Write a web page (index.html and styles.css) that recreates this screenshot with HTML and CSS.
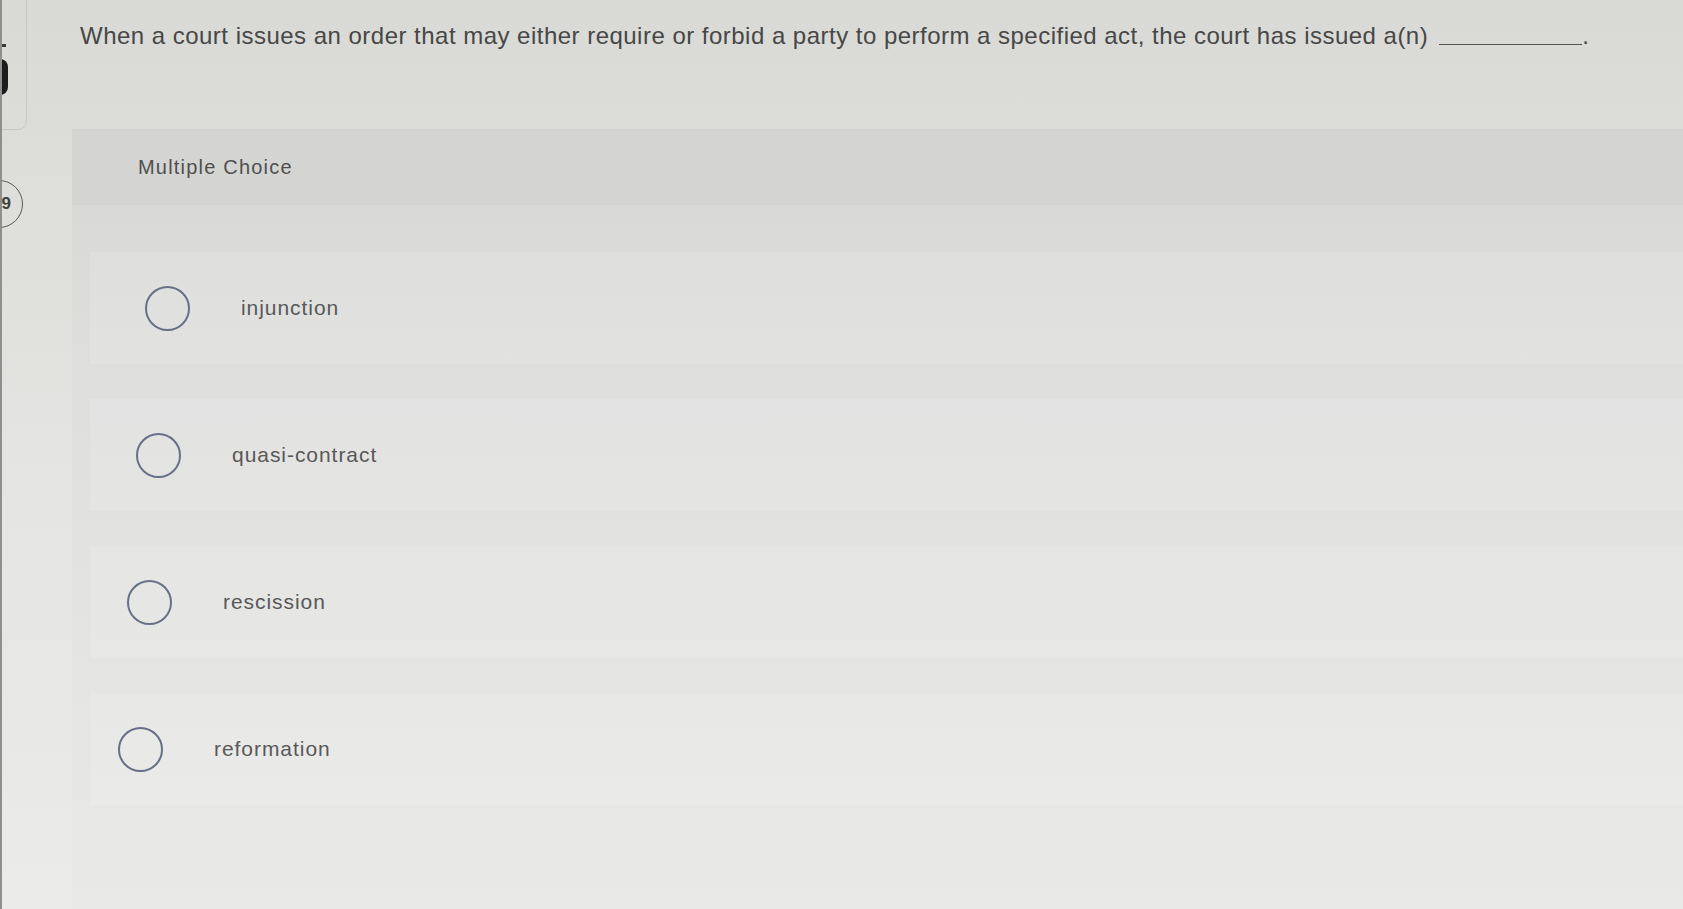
FILE: index.html
```html
<!DOCTYPE html>
<html lang="en">
  <head>
    <meta charset="UTF-8" />
    <title>Multiple Choice</title>
    <link rel="stylesheet" href="styles.css">
  </head>
  <body>
    <div class="rail">
      <div class="rail-top"></div>
      <div class="rail-dot"></div>
      <div class="rail-dash"></div>
      <div class="badge">9</div>
    </div>

    <div class="main">
      <p class="question">
        When a court issues an order that may either require or forbid a party to perform a specified act, the court has issued a(n)
        <span class="blank"></span>.
      </p>

      <div class="card">
        <div class="card-header">Multiple Choice</div>

        <ul class="options">
          <li class="option">
            <span class="radio"></span>
            <span class="option-text">injunction</span>
          </li>
          <li class="option">
            <span class="radio"></span>
            <span class="option-text">quasi-contract</span>
          </li>
          <li class="option">
            <span class="radio"></span>
            <span class="option-text">rescission</span>
          </li>
          <li class="option">
            <span class="radio"></span>
            <span class="option-text">reformation</span>
          </li>
        </ul>
      </div>
    </div>
  </body>
</html>
```

FILE: styles.css
```css
html,
body {
  height: 100%;
}
body {
  display: flex;
  margin: 0;
  padding: 0;
  overflow: hidden;
  font-family: "Liberation Sans", Arial, sans-serif;
  color: #4b4b4b;
  background: linear-gradient(#d9dad5, #e4e5e2 50%, #ebebea);
  border-left: 2px solid #8f8f8d;
}

/* left rail (partly cut off) */
.rail {
  position: relative;
  flex: none;
  width: 25px;
}
.rail-top {
  height: 130px;
  border-right: 1px solid #c6c7c2;
  border-bottom: 1px solid #c6c7c2;
  border-bottom-right-radius: 9px;
  box-sizing: border-box;
}
.rail-dot {
  position: absolute;
  left: -2px;
  top: 59px;
  width: 8px;
  height: 36px;
  background: #1c1c1c;
  border-radius: 0 18px 18px 0;
}
.rail-dash {
  position: absolute;
  left: -2px;
  top: 44px;
  width: 6px;
  height: 3px;
  background: #3a3a3a;
}
.badge {
  position: absolute;
  left: -27px;
  top: 180px;
  width: 48px;
  height: 48px;
  border: 1.5px solid #5b5b5b;
  border-radius: 50%;
  box-sizing: border-box;
  display: flex;
  align-items: center;
  justify-content: flex-end;
  padding-right: 11px;
  font-size: 17px;
  font-weight: bold;
  color: #3e3e3e;
}

.main {
  flex: 1;
  padding-left: 53px;
  display: flex;
  flex-direction: column;
}

.question {
  margin: 21px 0 0 0;
  font-size: 24px;
  line-height: 30px;
  letter-spacing: 0.48px;
  white-space: nowrap;
  color: #474747;
}
.blank {
  display: inline-block;
  width: 143px;
  margin-left: 4px;
  border-bottom: 1.5px solid #555;
  vertical-align: -1px;
}

.card {
  flex: 1;
  margin: 78px 0 0 -8px;
  background: linear-gradient(#d7d8d5, #e0e1df 40%, #e9e9e8);
}
.card-header {
  height: 76px;
  display: flex;
  align-items: center;
  padding-left: 66px;
  font-size: 20px;
  letter-spacing: 1.2px;
  color: #4f4f4f;
  background: #d4d5d2;
}

.options {
  list-style: none;
  margin: 0;
  padding: 47px 0 0 18px;
  display: flex;
  flex-direction: column;
  gap: 35px;
}
.option {
  height: 112px;
  display: flex;
  align-items: center;
  gap: 51px;
  padding-left: 55px;
  background: rgba(255, 255, 255, 0.12);
}
.option:nth-child(2) {
  padding-left: 46px;
}
.option:nth-child(3) {
  padding-left: 37px;
}
.option:nth-child(4) {
  padding-left: 28px;
}
.radio {
  width: 45px;
  height: 45px;
  border: 2px solid #687089;
  border-radius: 50%;
  box-sizing: border-box;
  flex: none;
}
.option-text {
  font-size: 21px;
  letter-spacing: 0.95px;
  color: #585858;
}
```
